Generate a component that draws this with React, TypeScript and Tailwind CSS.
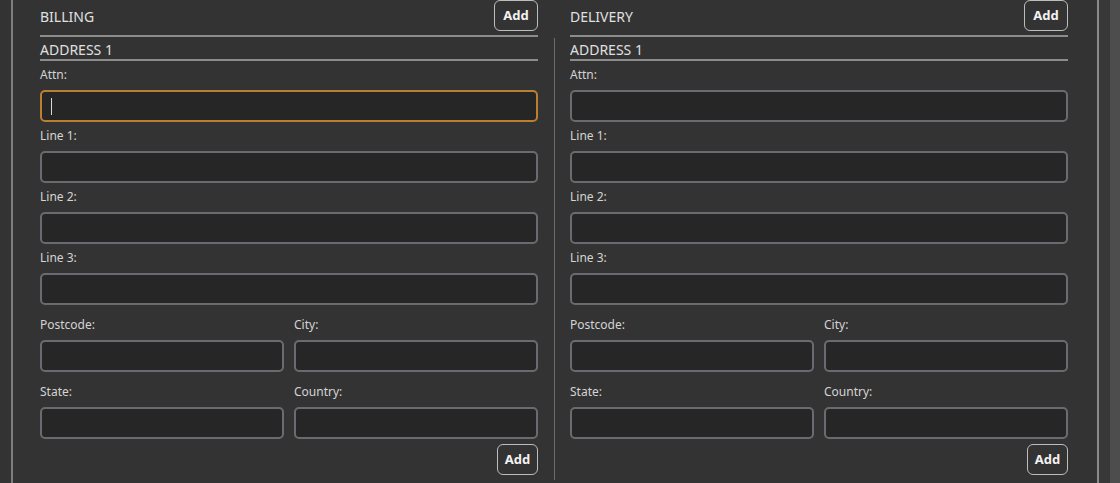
import React from "react";

const Field = ({ label, focused }: { label: string; focused?: boolean }) => (
  <div className="flex flex-col">
    <div className="text-[12px] leading-[16px] text-[#d4d4d4] mb-[7px]">{label}</div>
    <div
      className={
        "relative h-[32px] rounded-[5px] border-2 bg-[#262626] " +
        (focused ? "border-[#bb7f34]" : "border-[#6a6b70]")
      }
    >
      {focused && <div className="absolute left-[9px] top-[6px] w-[1px] h-[17px] bg-[#d8d8d8]" />}
    </div>
  </div>
);

const AddBtn = ({ w }: { w: string }) => (
  <button
    className={
      "h-[31px] rounded-[6px] border border-[#bdbdbd] bg-[#333333] text-[13px] font-bold text-[#f2f2f2] flex items-center justify-center " +
      w
    }
  >
    Add
  </button>
);

const Column = ({ title, focus }: { title: string; focus?: boolean }) => (
  <div className="w-[498px] flex flex-col">
    <div className="h-[37px] flex items-start justify-between border-b-2 border-[#8c8c8c]">
      <div className="mt-[7px] text-[14px] leading-[20px] text-[#e0e0e0]">{title}</div>
      <AddBtn w="w-[44px] h-[30px]" />
    </div>
    <div className="h-[24px] border-b-2 border-[#8c8c8c] text-[14px] leading-[21px] pt-[2px] text-[#e0e0e0]">
      ADDRESS 1
    </div>
    <div className="flex flex-col gap-[6px] mt-[6px]">
      <Field label="Attn:" focused={focus} />
      <Field label="Line 1:" />
      <Field label="Line 2:" />
      <Field label="Line 3:" />
    </div>
    <div className="grid grid-cols-2 gap-x-[10px] gap-y-[12px] mt-[12px]">
      <Field label="Postcode:" />
      <Field label="City:" />
      <Field label="State:" />
      <Field label="Country:" />
    </div>
    <div className="flex justify-end mt-[5px]">
      <AddBtn w="w-[41px]" />
    </div>
  </div>
);

export default function App() {
  return (
    <div
      className="w-[1120px] h-[483px] overflow-hidden bg-[#333333] flex"
      style={{ fontFamily: '"Noto Sans", "Open Sans", sans-serif' }}
    >
      <div className="w-[11px] shrink-0" />
      <div className="w-[2px] shrink-0 bg-[#7e7e7e]" />
      <div className="w-[27px] shrink-0" />
      <Column title="BILLING" focus />
      <div className="w-[32px] shrink-0 flex justify-center">
        <div className="w-[1px] mt-[38px] mb-[3px] bg-[#6c6c6c]" />
      </div>
      <Column title="DELIVERY" />
      <div className="w-[29px] shrink-0" />
      <div className="w-[2px] shrink-0 bg-[#8a8a8a]" />
      <div className="w-[11px] shrink-0 bg-[#383838]" />
      <div className="w-[10px] shrink-0 bg-[#4d4d4d]" />
    </div>
  );
}
